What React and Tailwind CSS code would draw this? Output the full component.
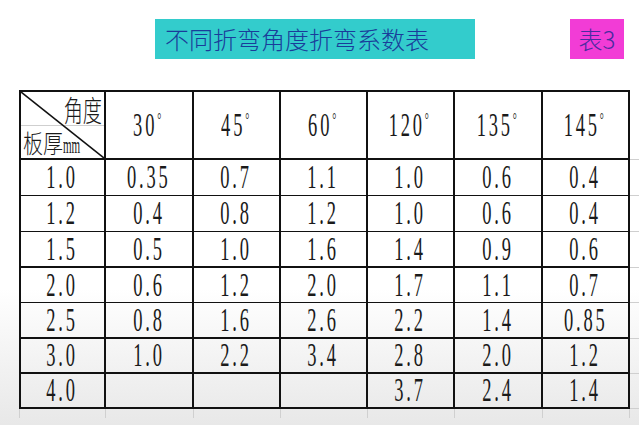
// 表3 — bending coefficient table, rebuilt as a plain grid.

const COLS = ["30", "45", "60", "120", "135", "145"];

// [thickness, ...values, thick bottom rule?]
const ROWS = [
  { t: "1.0", v: ["0.35", "0.7", "1.1", "1.0", "0.6", "0.4"], h: "h-[36px]", thick: false },
  { t: "1.2", v: ["0.4", "0.8", "1.2", "1.0", "0.6", "0.4"], h: "h-[36px]", thick: false },
  { t: "1.5", v: ["0.5", "1.0", "1.6", "1.4", "0.9", "0.6"], h: "h-[36px]", thick: true },
  { t: "2.0", v: ["0.6", "1.2", "2.0", "1.7", "1.1", "0.7"], h: "h-[35px]", thick: false },
  { t: "2.5", v: ["0.8", "1.6", "2.6", "2.2", "1.4", "0.85"], h: "h-[36px]", thick: true },
  { t: "3.0", v: ["1.0", "2.2", "3.4", "2.8", "2.0", "1.2"], h: "h-[35px]", thick: true },
  { t: "4.0", v: ["", "", "", "3.7", "2.4", "1.4"], h: "h-[35px]", thick: true },
];

const GRID = "grid grid-cols-[87px_88px_87px_87px_87px_88px_87px_9px]";
const serif = "font-['Liberation_Serif','Noto_Sans_CJK_SC',serif]";
const cjk = "font-['Noto_Sans_CJK_SC','Noto_Sans_CJK_TC',sans-serif]";

function Num({ children, deg }) {
  return (
    <span className={`inline-block origin-center scale-x-[0.56] whitespace-nowrap text-[33px] leading-none tracking-[0.15em] text-[#1a1a1a] ${serif}`}>
      {children}
      {deg && <span className="relative -top-[10px] text-[18px]">°</span>}
    </span>
  );
}

function Cell({ first, children }) {
  return (
    <div
      className={`flex items-center justify-center border-r-2 border-[#111] ${first ? "border-l-2" : ""}`}
    >
      {children}
    </div>
  );
}

export default function App() {
  return (
    <div className="h-[425px] w-[639px] overflow-hidden bg-linear-to-b from-white from-[68%] to-[#e8e8e8] pt-[19px]">
      {/* title strip */}
      <div className="flex h-[40px] items-stretch">
        <div className={`ml-[155px] flex w-[320px] items-center bg-[#33cccc] pl-[10px] text-[24px] font-light text-[#1a3c9a] ${cjk}`}>
          不同折弯角度折弯系数表
        </div>
        <div className={`ml-[95px] flex w-[54px] items-center justify-center bg-[#f23cd6] text-[24px] font-light text-[#4a2aa0] ${cjk}`}>
          表3
        </div>
      </div>

      {/* table */}
      <div className="ml-[19px] mt-[31px]">
        <div className={`${GRID} h-[70px] grid-rows-[70px]`}>
          <div className="relative border-y-2 border-r-2 border-l-2 border-[#111]">
            <div className="absolute inset-x-0 top-[33px] h-px bg-[#cfcfcf]" />
            <svg className="absolute inset-0 h-full w-full" viewBox="0 0 83 66" preserveAspectRatio="none">
              <line x1="0" y1="0" x2="83" y2="66" stroke="#111" strokeWidth="1.6" />
            </svg>
            <div className={`relative flex h-full flex-col justify-between text-[#1a1a1a] ${cjk}`}>
              <div className="flex justify-end pr-[2px] pt-[3px]">
                <span className="inline-block origin-right scale-x-[0.66] whitespace-nowrap text-[29px] leading-none font-light">角度</span>
              </div>
              <div className="flex items-end pb-[1px] pl-[2px]">
                <span className="inline-block origin-left scale-x-[0.8] whitespace-nowrap text-[25px] leading-none font-light">
                  板厚<span className={`inline-block origin-left scale-x-[0.6] text-[23px] ${serif}`}>mm</span>
                </span>
              </div>
            </div>
          </div>
          {COLS.map((c) => (
            <div key={c} className="flex items-center justify-center border-y-2 border-r-2 border-[#111]">
              <Num deg>{c}</Num>
            </div>
          ))}
          <div className="border-b border-[#cfcfcf]" />
        </div>

        {ROWS.map((r) => (
          <div key={r.t} className={`${GRID} ${r.h}`}>
            <div className={`col-span-7 grid grid-cols-subgrid ${r.thick ? "border-b-2" : "border-b"} border-[#111]`}>
              <Cell first>
                <Num>{r.t}</Num>
              </Cell>
              {r.v.map((v, i) => (
                <Cell key={i}>{v && <Num>{v}</Num>}</Cell>
              ))}
            </div>
            <div className="border-b border-[#cfcfcf]" />
          </div>
        ))}

        {/* faint sheet gridline stubs under the table */}
        <div className={`${GRID} h-[9px]`}>
          {Array.from({ length: 7 }).map((_, i) => (
            <div key={i} className={`border-r border-[#d0d0d0] ${i === 0 ? "border-l" : ""}`} />
          ))}
        </div>
      </div>
    </div>
  );
}
